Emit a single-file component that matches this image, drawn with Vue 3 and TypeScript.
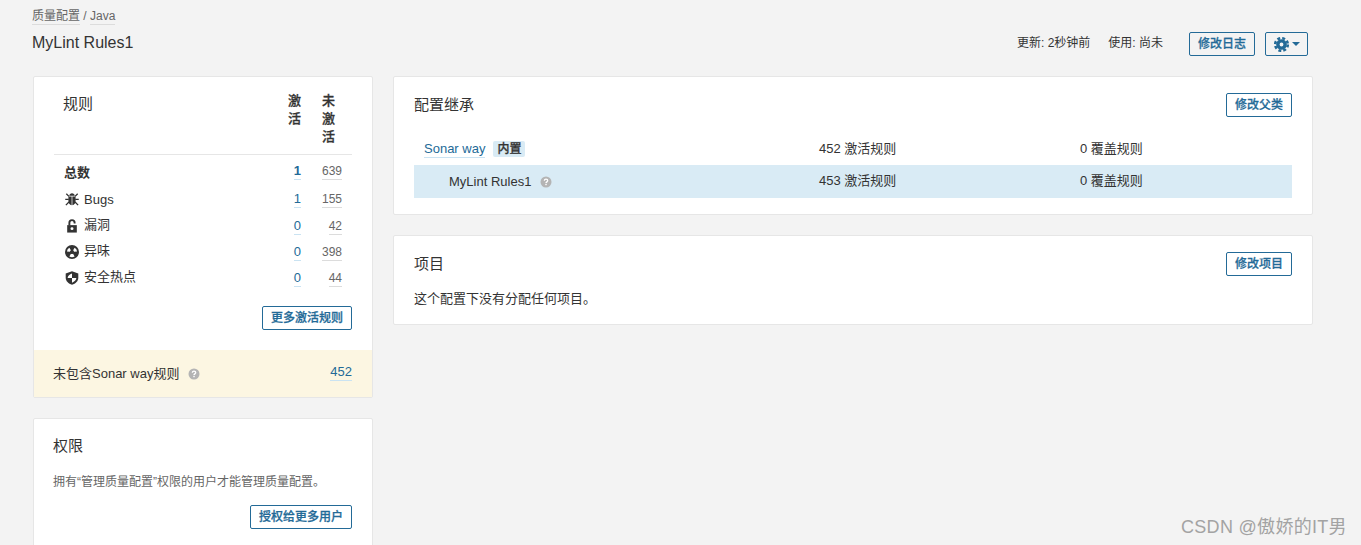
<script setup lang="ts">
interface Row { label: string; icon: string; active: string; inactive: string }
const rows: Row[] = [
  { label: 'Bugs', icon: 'bug', active: '1', inactive: '155' },
  { label: '漏洞', icon: 'lock', active: '0', inactive: '42' },
  { label: '异味', icon: 'smell', active: '0', inactive: '398' },
  { label: '安全热点', icon: 'shield', active: '0', inactive: '44' },
]
</script>

<template>
  <div class="page">
    <header class="head">
      <div>
        <div class="crumbs"><a class="gray">质量配置</a> / <a class="gray">Java</a></div>
        <h1 class="title">MyLint Rules1</h1>
      </div>
      <div class="actions">
        <span class="meta">更新: 2秒钟前</span>
        <span class="meta use">使用: 尚未</span>
        <button class="btn">修改日志</button>
        <button class="btn gear">
          <svg width="15" height="15" viewBox="0 0 14 14">
            <circle cx="7" cy="7" r="3.4" fill="none" stroke="#236a97" stroke-width="3.2" />
            <circle cx="7" cy="7" r="5.9" fill="none" stroke="#236a97" stroke-width="2.4" stroke-dasharray="2.7 1.93" />
          </svg>
          <i class="caret"></i>
        </button>
      </div>
    </header>

    <main class="cols">
      <div class="left">
        <section class="card rules">
          <div class="rules-body">
            <div class="grid thead">
              <div class="rules-title">规则</div>
              <div class="th">激活</div>
              <div class="th">未激活</div>
            </div>
            <div class="grid row total">
              <div class="lab">总数</div>
              <div class="num"><a class="blue strong">1</a></div>
              <div class="num"><a class="gray small">639</a></div>
            </div>
            <div v-for="r in rows" :key="r.label" class="grid row item">
              <div class="lab">
                <svg class="ico" viewBox="0 0 16 16" fill="#333">
                  <template v-if="r.icon === 'bug'">
                    <path d="M4.800 4.300C5 2.600 6.400 1.500 8 1.500s3 1.100 3.200 2.800z" />
                    <path d="M3.900 5.100h3.700V15C5.300 14.800 3.900 13 3.900 10.700zM8.400 5.100h3.700v5.600c0 2.300-1.400 4.100-3.700 4.300z" />
                    <path d="M1.500 2l3 3M14.500 2l-3 3M.3 8.500h4M15.700 8.500h-4M1 15l3.500-3.500M15 15l-3.500-3.500" stroke="#333" stroke-width="1.500" fill="none" />
                  </template>
                  <template v-else-if="r.icon === 'lock'">
                    <path d="M2.500 7h11v8.500h-11z" />
                    <path d="M5 7.500V4.200C5 2.200 6.300 1.300 8 1.300s3 .9 3 2.900V5" stroke="#333" stroke-width="2.200" fill="none" />
                    <circle cx="8" cy="11" r="1.700" fill="#fff" />
                  </template>
                  <template v-else-if="r.icon === 'smell'">
                    <circle cx="8" cy="8" r="8" />
                    <path transform="rotate(180 8 8)" d="M5 2.900a5.800 5.800 0 0 1 6 0L9.200 6a2.400 2.400 0 0 0-2.400 0zM2.200 8.600l3.400-.3c.1.700.5 1.300 1.100 1.700l-1.700 3a5.800 5.800 0 0 1-2.800-4.400zM13.800 8.600l-3.400-.3c-.1.700-.5 1.300-1.100 1.700l1.700 3a5.800 5.800 0 0 0 2.800-4.400z" fill="#fff" />
                  </template>
                  <template v-else>
                    <path d="M8 .3l7.200 2.500v4.900c0 3.900-3.100 6.700-7.200 8-4.100-1.300-7.200-4.100-7.200-8V2.800z" />
                    <path d="M8 2.800V8H3C3.200 5.600 5.300 3.800 8 2.800zM8 8h5c-.3 2.400-2.200 4.300-5 5.400z" fill="#fff" />
                  </template>
                </svg>
                <span :class="{ 'cjk-label': r.icon !== 'bug' }">{{ r.label }}</span>
              </div>
              <div class="num"><a class="blue">{{ r.active }}</a></div>
              <div class="num"><a class="gray small">{{ r.inactive }}</a></div>
            </div>
            <div class="more"><button class="btn">更多激活规则</button></div>
          </div>
          <div class="warn">
            <span class="warn-text">未包含Sonar way规则
              <svg class="help" viewBox="0 0 12 12"><circle cx="6" cy="6" r="5.500" fill="#b4b4b4" /><path d="M4.300 4.700C4.400 3.700 5.100 3.200 6 3.200c1 0 1.700.6 1.700 1.400 0 1.300-1.700 1.200-1.700 2.500" fill="none" stroke="#fff" stroke-width="1.300" /><rect x="5.300" y="7.800" width="1.400" height="1.400" fill="#fff" /></svg>
            </span>
            <a class="blue">452</a>
          </div>
        </section>

        <section class="card perm">
          <h2 class="h2">权限</h2>
          <p class="perm-text">拥有“管理质量配置”权限的用户才能管理质量配置。</p>
          <div class="more perm-btn"><button class="btn">授权给更多用户</button></div>
        </section>
      </div>

      <div class="right">
        <section class="card inherit">
          <div class="card-head">
            <h2 class="h2">配置继承</h2>
            <button class="btn">修改父类</button>
          </div>
          <div class="irow first">
            <div><a class="blue">Sonar way</a><span class="badge">内置</span></div>
            <div class="cjk">452 激活规则</div>
            <div class="cjk">0 覆盖规则</div>
          </div>
          <div class="irow sel">
            <div class="indent">MyLint Rules1
              <svg class="help" viewBox="0 0 12 12"><circle cx="6" cy="6" r="5.500" fill="#b4b4b4" /><path d="M4.300 4.700C4.400 3.700 5.100 3.200 6 3.200c1 0 1.700.6 1.700 1.400 0 1.300-1.700 1.200-1.700 2.500" fill="none" stroke="#fff" stroke-width="1.300" /><rect x="5.300" y="7.800" width="1.400" height="1.400" fill="#fff" /></svg>
            </div>
            <div class="cjk">453 激活规则</div>
            <div class="cjk">0 覆盖规则</div>
          </div>
        </section>

        <section class="card projects">
          <div class="card-head">
            <h2 class="h2">项目</h2>
            <button class="btn">修改项目</button>
          </div>
          <p class="none">这个配置下没有分配任何项目。</p>
        </section>
      </div>
    </main>

    <div class="mark">CSDN @傲娇的IT男</div>
  </div>
</template>

<style>
html, body { margin: 0; background: #f3f3f3; overflow: hidden; }
</style>

<style scoped>
.page {
  height: 545px;
  overflow: hidden;
  position: relative;
  box-sizing: border-box;
  padding: 9px 48px 0 33px;
  font-family: "Liberation Sans", "Noto Sans CJK SC", sans-serif;
  font-size: 13px;
  color: #333;
  background: #f3f3f3;
}
.head { display: flex; justify-content: space-between; height: 67px; padding-right: 5px; box-sizing: border-box; }
.crumbs { font-size: 12px; line-height: 15px; color: #666; margin-left: -1px; }
.title { margin: 9px 0 0 -1px; font-size: 16px; font-weight: 400; line-height: 20px; color: #333; }
.actions { display: flex; align-items: flex-start; height: 24px; margin-top: 23px; font-size: 12px; line-height: 23px; }
.meta { margin-right: 18px; color: #333; }
.use { margin-right: 26px; }
a { border-bottom: 1px solid; padding-bottom: 1px; }
.gray { color: #666; border-color: #dcdcdc; }
.blue { color: #236a97; border-color: #cae3f2; }
.strong { font-weight: 700; }
.small { font-size: 12px; font-weight: 400; }
.btn {
  height: 24px;
  box-sizing: border-box;
  padding: 0 8px;
  border: 1px solid #236a97;
  border-radius: 2px;
  background: transparent;
  color: #236a97;
  font: 500 12px/22px "Liberation Sans", "Noto Sans CJK SC", sans-serif;
  -webkit-text-stroke: .25px #236a97;
}
.gear { display: flex; align-items: center; width: 43px; margin-left: 10px; padding: 0 0 0 8px; }
.caret { margin-left: 3px; width: 0; height: 0; border: 4px solid transparent; border-top-color: #236a97; border-bottom: 0; }
.cols { display: flex; gap: 20px; align-items: flex-start; }
.left { width: 340px; display: flex; flex-direction: column; gap: 20px; }
.right { width: 920px; display: flex; flex-direction: column; gap: 20px; }
.card { background: #fff; border: 1px solid #e6e6e6; border-radius: 2px; box-sizing: border-box; }
.rules-body { padding: 15px 20px 20px; }
.grid { display: grid; grid-template-columns: 1fr 34px 41px; }
.thead { border-bottom: 1px solid #e6e6e6; padding-bottom: 8px; height: 54px; box-sizing: content-box; }
.rules-title { padding-left: 10px; font-size: 15px; line-height: 24px; margin-left: -1px; }
.th { padding: 0 10px 0 11px; font-size: 13px; font-weight: 500; -webkit-text-stroke: .3px #333; line-height: 18px; color: #333; word-break: break-all; }
.row { height: 26px; align-items: center; box-sizing: border-box; }
.item { padding-top: 4px; }
.total { margin-top: 3px; font-weight: 700; }
.lab { padding-left: 10px; display: flex; align-items: center; }
.ico { width: 14px; height: 14px; flex: none; margin: 0 5px 0 1px; }
.cjk-label { margin-bottom: 4px; }
.num { text-align: right; padding-right: 10px; line-height: 16px; }
.more { display: flex; justify-content: flex-end; }
.rules-body .more { margin-top: 18px; }
.warn {
  display: flex;
  justify-content: space-between;
  align-items: center;
  height: 47px;
  box-sizing: border-box;
  padding: 0 20px 2px 19px;
  background: #fcf6e2;
}
.help { width: 12px; height: 12px; margin-left: 5px; vertical-align: -2px; }
.perm { padding: 16px 20px 16px 19px; height: 140px; }
.h2 { margin: 0; font-size: 15px; font-weight: 400; line-height: 22px; color: #333; }
.perm-text { margin: 16px 0 0; font-size: 12px; line-height: 18px; color: #666; }
.perm-btn { margin-top: 14px; }
.card-head { display: flex; justify-content: space-between; align-items: center; }
.inherit { padding: 16px 20px; height: 139px; }
.inherit .card-head { height: 24px; }
.irow { display: grid; grid-template-columns: 395px 261px 1fr; height: 33px; align-items: center; }
.irow > div { padding-left: 10px; }
.irow > .cjk { padding-bottom: 2px; }
.sel > .cjk { padding-bottom: 4px; }
.first { margin-top: 15px; }
.sel { background: #d9ebf5; }
.irow > .indent { padding-left: 35px; }
.badge {
  display: inline-block;
  margin-left: 8px;
  padding: 0 4px;
  background: #d9ebf5;
  border-radius: 2px;
  font-size: 12px;
  font-weight: 500;
  -webkit-text-stroke: .25px #333;
  line-height: 16px;
  color: #333;
}
.projects { padding: 16px 20px; height: 90px; }
.none { margin: 14px 0 0; line-height: 18px; color: #333; }
.mark {
  position: absolute;
  left: 1181px;
  top: 516px;
  font-size: 18px;
  letter-spacing: .3px;
  line-height: 22px;
  color: #a3a3a3;
}
</style>
